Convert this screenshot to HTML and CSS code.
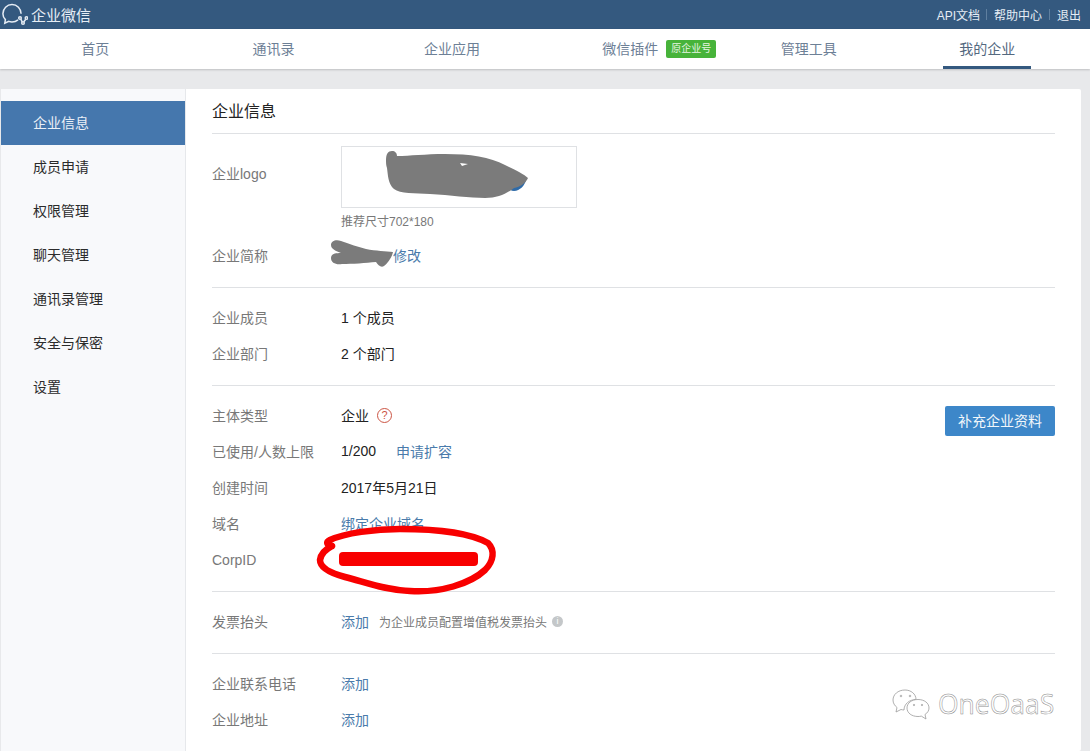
FILE: index.html
```html
<!DOCTYPE html>
<html lang="zh-CN">
<head>
    <meta charset="UTF-8">
    <title>企业微信</title>
    <link rel="stylesheet" href="styles.css">
</head>
<body>
    <header class="topbar">
        <div class="brand">
            <svg class="brand-icon" width="26" height="24" viewBox="0 0 26 24" fill="none" stroke="#e6edf5" stroke-width="1.5">
                <path d="M16 16.800C14.300 18.200 12.300 18.900 10 18.900c-1.100 0-2.200-.2-3.200-.5L2.800 20.200l.6-3.600C1.800 15 .9 13 .9 10.800.9 5.500 5 1.600 10 1.600s9.100 3.900 9.100 9.200"/>
                <circle cx="18" cy="15" r="1.300"/>
                <circle cx="24.500" cy="15" r="1.300"/>
                <circle cx="21" cy="20" r="1.300"/>
                <path d="M18.800 16.200l1.400 2.600M23.800 16.200L21.800 18.800"/>
            </svg>
            <span>企业微信</span>
        </div>
        <div class="toplinks">
            <a>API文档</a><i></i><a>帮助中心</a><i></i><a>退出</a>
        </div>
    </header>

    <nav class="mainnav">
        <a class="nav-item">首页</a>
        <a class="nav-item">通讯录</a>
        <a class="nav-item">企业应用</a>
        <a class="nav-item">微信插件<span class="nav-badge">原企业号</span></a>
        <a class="nav-item">管理工具</a>
        <a class="nav-item active">我的企业</a>
    </nav>

    <div class="card">
        <aside class="sidebar">
            <a class="side-item active">企业信息</a>
            <a class="side-item">成员申请</a>
            <a class="side-item">权限管理</a>
            <a class="side-item">聊天管理</a>
            <a class="side-item">通讯录管理</a>
            <a class="side-item">安全与保密</a>
            <a class="side-item">设置</a>
        </aside>

        <main class="content">
            <h2 class="title">企业信息</h2>

            <section class="group first">
                <div class="row logo-row">
                    <span class="label">企业logo</span>
                    <div>
                        <div class="logo-box"></div>
                        <p class="hint">推荐尺寸702*180</p>
                    </div>
                </div>
                <div class="row">
                    <span class="label">企业简称</span>
                    <a class="link short-edit">修改</a>
                </div>
            </section>

            <section class="group">
                <div class="row"><span class="label">企业成员</span><span>1 个成员</span></div>
                <div class="row"><span class="label">企业部门</span><span>2 个部门</span></div>
            </section>

            <section class="group">
                <button class="action" type="button">补充企业资料</button>
                <div class="row">
                    <span class="label">主体类型</span><span>企业</span>
                    <span class="help">?</span>
                </div>
                <div class="row">
                    <span class="label">已使用/人数上限</span><span>1/200</span>
                    <a class="link expand">申请扩容</a>
                </div>
                <div class="row"><span class="label">创建时间</span><span>2017年5月21日</span></div>
                <div class="row"><span class="label">域名</span><a class="link">绑定企业域名</a></div>
                <div class="row"><span class="label latin">CorpID</span></div>
            </section>

            <section class="group">
                <div class="row">
                    <span class="label">发票抬头</span><a class="link">添加</a>
                    <span class="note">为企业成员配置增值税发票抬头</span>
                    <span class="info">i</span>
                </div>
            </section>

            <section class="group">
                <div class="row"><span class="label">企业联系电话</span><a class="link">添加</a></div>
                <div class="row"><span class="label">企业地址</span><a class="link">添加</a></div>
            </section>
        </main>
    </div>

    <!-- marks drawn over the screenshot -->
    <svg class="scribble" width="1090" height="751" viewBox="0 0 1090 751">
        <path fill="#2f6ba8" d="M508 186C514 186 522 184 526 180 525 185 520 191 514 191 511 191 509 189 508 186Z"/>
        <path fill="#7b7b7b" d="M386 160C386 154 388 151 392 151 395 151 397 153 397 156 410 156 425 154 445 154 470 154 490 157 505 165 515 170 524 174 528 178 526 183 520 187 514 188 506 194 498 198 485 198 470 198 450 195 430 194 415 193 400 194 394 189 388 184 388 175 387 168 386 165 386 163 386 160Z"/>
        <path fill="#fff" d="M460 163l8 1-6 2z"/>
        <path fill="#7b7b7b" d="M331 245C331 241 336 239 341 241 350 244 358 247 366 249 376 251 386 251 393 252 392 257 388 263 384 266 381 268 378 265 376 262 366 263 352 264 342 264 336 265 331 263 331 258 331 254 335 253 341 253 336 251 331 249 331 245Z"/>
        <path fill="none" stroke="#f80000" stroke-width="6.500" stroke-linecap="round" d="M332 546C326 549 321 553 320 560 320 568 330 573 345 577 365 582 385 590 410 591 440 593 470 584 485 570 494 561 495 550 488 543 470 533 440 529 400 529 375 529 345 533 330 540 326 542 326 545 332 546"/>
        <rect x="339" y="552" width="139" height="14" rx="4" fill="#f80000"/>
    </svg>

    <div class="watermark">
        <svg width="40" height="32" viewBox="0 0 40 32" fill="#fff" stroke="#9a9a9a" stroke-width="0.8">
            <path d="M14 2C7 2 2 6.500 2 12c0 3 1.500 5.500 4 7.500L5 24l5-2.500c1 .3 2 .4 3 .5 0-6 5.500-10.500 12-10.500C25 6 20 2 14 2z"/>
            <path d="M38 20c0-5-4.700-8.500-11-8.500S16 15 16 20s4.700 8.500 11 8.500c1.200 0 2.300-.1 3.300-.4L35 31l-1-4.500c2.500-1.600 4-3.900 4-6.500z"/>
            <circle cx="10" cy="8" r="0.8"/><circle cx="19" cy="8" r="0.8"/>
            <circle cx="23" cy="17" r="0.7"/><circle cx="31" cy="17" r="0.7"/>
        </svg>
        <span>OneOaaS</span>
    </div>
</body>
</html>
```
FILE: styles.css
```css
* {
    box-sizing: border-box;
}
html, body {
    height: 100%;
}
body {
    margin: 0;
    overflow: hidden;
    position: relative;
    background-color: #e8e9eb;
    color: #222;
    font-family: "Liberation Sans", "Noto Sans CJK SC", sans-serif;
    font-size: 14px;
}
a {
    cursor: pointer;
}

.topbar {
    height: 29px;
    background-color: #34597f;
    display: flex;
    justify-content: space-between;
    align-items: center;
    padding: 0 9px 0 2px;
    color: #e6edf5;
}
.brand {
    display: flex;
    align-items: center;
    font-size: 15px;
}
.brand-icon {
    margin-right: 3px;
}
.toplinks {
    display: flex;
    align-items: center;
    font-size: 12px;
}
.toplinks i {
    width: 1px;
    height: 11px;
    margin: 0 7px;
    background-color: #5f7f9f;
}
.toplinks i:first-of-type {
    margin-left: 6px;
}

.mainnav {
    height: 40px;
    padding-left: 6px;
    background-color: #fff;
    box-shadow: 0 1px 2px rgba(0, 0, 0, 0.18);
    display: flex;
}
.nav-item {
    position: relative;
    width: 178.4px;
    line-height: 40px;
    text-align: center;
    color: #6d8096;
}
.nav-item.active {
    color: #54697f;
}
.nav-item.active::after {
    content: "";
    position: absolute;
    left: 45px;
    bottom: 0;
    width: 88px;
    height: 3px;
    background-color: #34597f;
}
.nav-badge {
    position: absolute;
    left: 125px;
    top: 11px;
    width: 50px;
    height: 18px;
    border-radius: 2px;
    background-color: #47b33a;
    color: #e6f5e2;
    font-size: 10px;
    line-height: 18px;
    text-align: center;
}

.card {
    margin: 20px 9px 0 1px;
    height: 662px;
    background-color: #fff;
    border-radius: 2px;
    display: flex;
}
.sidebar {
    width: 185px;
    flex-shrink: 0;
    padding-top: 12px;
    background-color: #f8f9fb;
    border-right: 1px solid #e6e8eb;
}
.side-item {
    display: block;
    height: 44px;
    padding-left: 32px;
    line-height: 44px;
    color: #2b2b2b;
}
.side-item.active {
    background-color: #4577ad;
    color: #eaf0f7;
}

.content {
    flex: 1;
    padding: 0 26px;
}
.title {
    margin: 0;
    height: 45px;
    padding-top: 12px;
    border-bottom: 1px solid #dfe1e4;
    font-size: 16px;
    font-weight: normal;
    line-height: 22px;
    color: #222;
}
.group {
    position: relative;
    padding: 11px 0 14px;
    border-bottom: 1px solid #dfe1e4;
}
.group:last-child {
    border-bottom: none;
}
.group.first {
    padding-top: 12px;
}
.row {
    display: flex;
    align-items: center;
    height: 36px;
}
.label {
    width: 129px;
    flex-shrink: 0;
    color: #787878;
}
.label.latin {
    padding-top: 2px;
}
.link {
    color: #4a7bab;
}
.logo-row {
    height: 84px;
    align-items: flex-start;
    margin-bottom: 7px;
}
.logo-row .label {
    line-height: 56px;
}
.logo-box {
    width: 236px;
    height: 62px;
    border: 1px solid #dfe1e4;
}
.hint {
    margin: 6px 0 0;
    font-size: 12px;
    line-height: 16px;
    color: #787878;
}
.short-edit {
    margin-left: 52px;
}
.expand {
    margin-left: 20px;
}
.help {
    width: 15px;
    height: 15px;
    margin-left: 8px;
    border: 1px solid #cc5544;
    border-radius: 50%;
    color: #cc5544;
    font-size: 11px;
    line-height: 13px;
    text-align: center;
}
.note {
    margin-left: 10px;
    font-size: 12px;
    color: #787878;
}
.info {
    width: 11px;
    height: 11px;
    margin-left: 5px;
    border-radius: 50%;
    background-color: #c4c7c9;
    color: #fff;
    font-size: 9px;
    line-height: 11px;
    text-align: center;
}
.action {
    position: absolute;
    right: 0;
    top: 20px;
    width: 110px;
    height: 30px;
    padding: 0 0 2px;
    border: none;
    border-radius: 2px;
    background-color: #3d87c9;
    color: #f2f7fb;
    font-family: inherit;
    font-size: 14px;
    cursor: pointer;
}

.scribble {
    position: absolute;
    left: 0;
    top: 0;
    pointer-events: none;
}
.watermark {
    position: absolute;
    left: 891px;
    top: 686px;
    display: flex;
    align-items: center;
    gap: 7px;
    color: #fff;
    font-size: 26.5px;
    font-family: "Open Sans", sans-serif;
    -webkit-text-stroke: 0.5px #8c8c8c;
}
```
